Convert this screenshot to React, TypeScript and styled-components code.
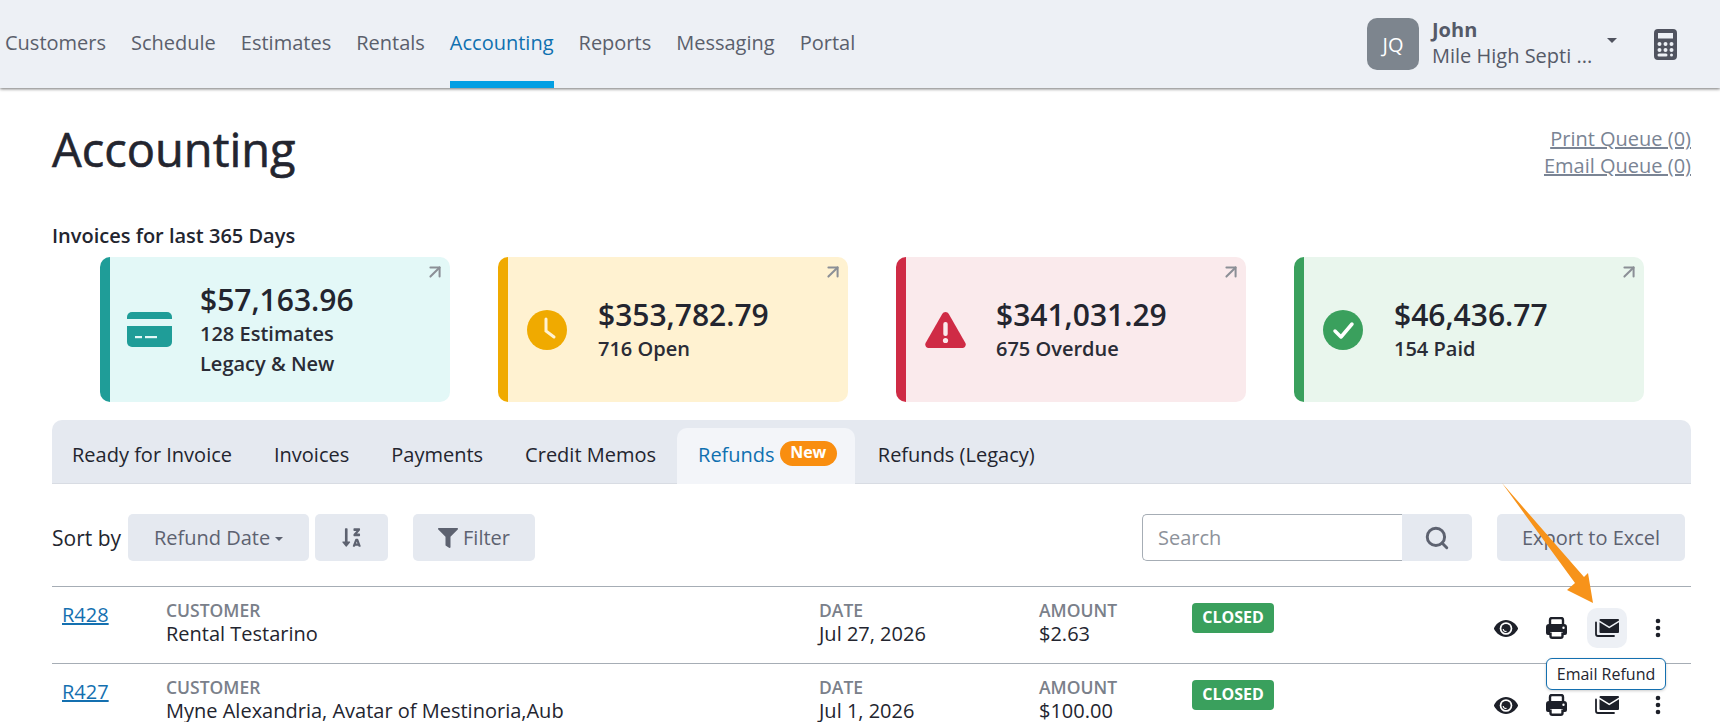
import React from "react";
import styled, { createGlobalStyle } from "styled-components";
import { FaFilter, FaSortAlphaDownAlt } from "react-icons/fa";
import { ArrowUpRight, Search } from "lucide-react";

const Global = createGlobalStyle`
  html, body { margin: 0; padding: 0; background: #fff; }
  body { font-family: "Open Sans", "Liberation Sans", sans-serif; color: #23252f; }
  * { box-sizing: border-box; }
`;

const Page = styled.div`
  position: relative;
  width: 1720px;
  height: 722px;
  overflow: hidden;
`;

const Header = styled.header`
  height: 88px;
  background: #edf0f5;
  box-shadow: 0 1px 3px rgba(0, 0, 0, 0.55);
  display: flex;
  justify-content: space-between;
  padding: 0 43px 0 5px;
`;

const Nav = styled.nav`
  display: flex;
  gap: 25px;
`;

const NavItem = styled.a<{ $active?: boolean }>`
  height: 88px;
  padding-top: 29px;
  font-size: 20px;
  line-height: 27px;
  color: ${(p) => (p.$active ? "#0f70b0" : "#5a5f6c")};
  border-bottom: 7px solid ${(p) => (p.$active ? "#049fe3" : "transparent")};
`;

const UserArea = styled.div`
  display: flex;
  align-items: flex-start;
  padding-top: 18px;
`;

const Avatar = styled.div`
  width: 52px;
  height: 52px;
  border-radius: 10px;
  background: #7d858e;
  color: #fff;
  font-size: 20px;
  display: flex;
  align-items: center;
  justify-content: center;
  margin-right: 13px;
`;

const UserText = styled.div`
  width: 172.5px;
  font-size: 20px;
  line-height: 26px;
  color: #555a68;
  margin-top: -1px;
`;

const UserName = styled.div`
  font-weight: 700;
`;

const Caret = styled.span`
  width: 0;
  height: 0;
  border-left: 5.5px solid transparent;
  border-right: 5.5px solid transparent;
  border-top: 5.5px solid #50535f;
  margin: 20px 37.5px 0 2px;
`;

const CalcIcon = styled.span`
  display: flex;
  margin-top: 11px;
`;

const Main = styled.main`
  padding: 0 29px 0 52px;
`;

const TitleRow = styled.div`
  display: flex;
  justify-content: space-between;
  height: 136px;
  padding-top: 35px;
`;

const Title = styled.h1`
  margin: 0;
  font-size: 47px;
  line-height: 53px;
  font-weight: 400;
  -webkit-text-stroke: 0.6px #23252f;
  color: #23252f;
`;

const Queues = styled.div`
  display: flex;
  flex-direction: column;
  align-items: flex-end;
  font-size: 20px;
  line-height: 27px;
  margin-top: 2px;
`;

const QueueLink = styled.a`
  color: #7a8494;
  text-decoration: underline;
`;

const SectionLabel = styled.div`
  font-size: 20px;
  font-weight: 600;
  line-height: 24px;
  color: #23252f;
`;

const Cards = styled.div`
  display: flex;
  gap: 48px;
  padding-left: 48px;
  margin-top: 9px;
`;

const Card = styled.div<{ $bg: string; $accent: string }>`
  position: relative;
  width: 350px;
  height: 145px;
  background: ${(p) => p.$bg};
  border-left: 10px solid ${(p) => p.$accent};
  border-radius: 10px;
  display: flex;
  align-items: center;
`;

const CardIcon = styled.div`
  width: 90px;
  display: flex;
  justify-content: center;
  padding-right: 12px;
  flex: none;
`;

const CardBody = styled.div`
  color: #23252f;
`;

const Amount = styled.div`
  font-size: 30px;
  line-height: 38px;
  font-weight: 600;
`;

const SubLine = styled.div`
  font-size: 20px;
  line-height: 30px;
  font-weight: 600;
  color: #2a2c36;
`;

const Corner = styled.span`
  position: absolute;
  top: 4px;
  right: 4px;
  display: flex;
  color: #8b8f96;
`;

const TabStrip = styled.div`
  display: flex;
  margin-top: 18px;
  height: 64px;
  padding: 8px 0 0 0;
  background: #e5e9f0;
  border-radius: 10px 10px 0 0;
  border-bottom: 1px solid #d8dce3;
`;

const Tab = styled.div<{ $active?: boolean }>`
  height: 56px;
  padding: 0 ${(p) => (p.$active ? "18px" : "21px")} 3px 21px;
  margin-right: ${(p) => (p.$active ? "2px" : "0")};
  display: flex;
  align-items: center;
  gap: 5px;
  font-size: 20px;
  color: ${(p) => (p.$active ? "#0f70b0" : "#23252f")};
  background: ${(p) => (p.$active ? "#f3f5f9" : "transparent")};
  border-radius: 10px 10px 0 0;
  &:first-child { padding-left: 20px; }
`;

const NewBadge = styled.span`
  height: 25px;
  padding: 0 10.5px;
  border-radius: 13px;
  background: #f98e10;
  color: #fff;
  font-size: 16px;
  font-weight: 700;
  line-height: 23px;
  margin-top: -3px;
`;

const Toolbar = styled.div`
  display: flex;
  align-items: center;
  margin-top: 30px;
  height: 47px;
`;

const SortLabel = styled.span`
  font-size: 21px;
  color: #23252f;
  width: 76px;
`;

const ToolButton = styled.div<{ $w: number; $ml?: number }>`
  width: ${(p) => p.$w}px;
  height: 47px;
  margin-left: ${(p) => p.$ml ?? 0}px;
  background: #e5e9f0;
  border-radius: 5px;
  color: #5d6270;
  font-size: 20px;
  display: flex;
  align-items: center;
  justify-content: center;
  gap: 5px;
  flex: none;
`;

const SmallCaret = styled.span`
  width: 0;
  height: 0;
  border-left: 4.5px solid transparent;
  border-right: 4.5px solid transparent;
  border-top: 4.5px solid #5d6270;
  margin-top: 3px;
`;

const SearchBox = styled.div`
  margin-left: auto;
  width: 260px;
  height: 47px;
  border: 1px solid #a6adb5;
  border-right: none;
  border-radius: 5px 0 0 5px;
  color: #8d929a;
  font-size: 20px;
  display: flex;
  align-items: center;
  padding-left: 15px;
`;

const SearchButton = styled(ToolButton)`
  border-radius: 0 5px 5px 0;
`;

const ToolbarEnd = styled.span`
  width: 6px;
  flex: none;
`;

const Rows = styled.div`
  margin-top: 25px;
`;

const Row = styled.div`
  display: grid;
  grid-template-columns: 114px 653px 220px 153px 295px 1fr;
  height: 77px;
  border-top: 1px solid #a6adb5;
  padding-top: 12px;
`;

const RefLink = styled.a`
  padding-left: 10px;
  margin-top: 3px;
  font-size: 20px;
  line-height: 26px;
  color: #1470b0;
  text-decoration: underline;
`;

const Field = styled.div`
  font-size: 20px;
  line-height: 24px;
  color: #23252f;
`;

const FieldLabel = styled.div`
  font-size: 17.5px;
  font-weight: 600;
  color: #7a808a;
  line-height: 23px;
`;

const StatusBadge = styled.div`
  width: 82px;
  height: 30px;
  margin-top: 4px;
  background: #3aa05d;
  color: #fff;
  border-radius: 4px;
  font-size: 16px;
  font-weight: 700;
  line-height: 28px;
  text-align: center;
`;

const Actions = styled.div`
  display: flex;
  align-items: center;
  height: 40px;
  margin-top: 9px;
  margin-left: -1px;
`;

const ActionButton = styled.div<{ $hover?: boolean }>`
  position: relative;
  width: 40px;
  height: 40px;
  margin-right: 10.5px;
  border-radius: 10px;
  background: ${(p) => (p.$hover ? "#edf0f5" : "transparent")};
  color: #1d2029;
  display: flex;
  align-items: center;
  justify-content: center;
  flex: none;
`;

const Tooltip = styled.div`
  position: absolute;
  top: 50px;
  left: -41px;
  width: 120px;
  height: 32px;
  background: #fff;
  border: 1px solid #1470b0;
  border-radius: 6px;
  box-shadow: 0 1px 3px rgba(0, 0, 0, 0.2);
  color: #23252f;
  font-size: 16px;
  line-height: 30px;
  text-align: center;
  white-space: nowrap;
  z-index: 3;
`;

const ArrowOverlay = styled.svg`
  position: absolute;
  left: 0;
  top: 0;
  width: 1720px;
  height: 722px;
  pointer-events: none;
  z-index: 2;
`;

const CalculatorIcon = () => (
  <svg width="23" height="31" viewBox="0 0 23 31" fill="#50535f">
    <path fillRule="evenodd" d="M4 0h15a4 4 0 0 1 4 4v23a4 4 0 0 1-4 4H4a4 4 0 0 1-4-4V4a4 4 0 0 1 4-4zM4 4v5.500h15V4zM5.500 13a2 2 0 1 0 0 4 2 2 0 0 0 0-4zm6 0a2 2 0 1 0 0 4 2 2 0 0 0 0-4zm6 0a2 2 0 1 0 0 4 2 2 0 0 0 0-4zm-12 6a2 2 0 1 0 0 4 2 2 0 0 0 0-4zm6 0a2 2 0 1 0 0 4 2 2 0 0 0 0-4zm6 0a2 2 0 1 0 0 4 2 2 0 0 0 0-4zM5 24.500a1.500 1.500 0 0 0 0 3h7a1.500 1.500 0 0 0 0-3zm12.500 0a1.500 1.500 0 1 0 0 3 1.500 1.500 0 0 0 0-3z" />
  </svg>
);

const CreditCardIcon = () => (
  <svg width="45" height="35" viewBox="0 0 45 35" fill="#1f9d98">
    <path d="M0 7V5a5 5 0 0 1 5-5h35a5 5 0 0 1 5 5v2z" />
    <path d="M0 14h45v16a5 5 0 0 1-5 5H5a5 5 0 0 1-5-5z" />
    <rect x="8" y="24" width="7" height="2.200" fill="#e3f8f7" />
    <rect x="18" y="24" width="12" height="2.200" fill="#e3f8f7" />
  </svg>
);

const ClockIcon = () => (
  <svg width="40" height="40" viewBox="0 0 40 40">
    <circle cx="20" cy="20" r="20" fill="#f0aa00" />
    <path d="M19 9v12l8 6" stroke="#fff2d1" strokeWidth="3" strokeLinecap="round" fill="none" />
  </svg>
);

const WarnIcon = () => (
  <svg width="41" height="36" viewBox="0 0 41 36">
    <path d="M20.500 0c1.400 0 2.600.8 3.300 2l16.600 29c1.100 2.200-.4 5-3 5H3.600c-2.600 0-4.100-2.800-3-5L17.200 2c.7-1.200 1.900-2 3.300-2z" fill="#cf2b45" />
    <rect x="18.300" y="10" width="4.400" height="14" rx="2" fill="#faeaec" />
    <circle cx="20.500" cy="28.500" r="2.600" fill="#faeaec" />
  </svg>
);

const CheckIcon = () => (
  <svg width="40" height="40" viewBox="0 0 40 40">
    <circle cx="20" cy="20" r="20" fill="#3aa05d" />
    <path d="M12 21l6 6 11-13" stroke="#fff" strokeWidth="3.500" strokeLinecap="round" strokeLinejoin="round" fill="none" />
  </svg>
);

const EyeIcon = () => (
  <svg width="24" height="17" viewBox="0 0 24 17" fill="#1d2029">
    <path d="M12 0C6.500 0 2.300 3.800.2 7.700a1.700 1.700 0 0 0 0 1.600C2.300 13.200 6.500 17 12 17s9.700-3.800 11.800-7.700a1.700 1.700 0 0 0 0-1.600C21.700 3.800 17.500 0 12 0z" />
    <circle cx="12" cy="8.500" r="6.300" fill="#fff" />
    <circle cx="12" cy="8.500" r="4.600" />
    <path d="M12 5.600a2.900 2.900 0 0 1 2.900 2.900" stroke="#fff" strokeWidth="1.100" fill="none" transform="rotate(170 12 8.500)" />
  </svg>
);

const PrinterIcon = () => (
  <svg width="21" height="22" viewBox="0 0 21 22" fill="#1d2029">
    <path d="M4 8V3a2 2 0 0 1 2-2h9a2 2 0 0 1 2 2v5" fill="none" stroke="#1d2029" strokeWidth="2.400" />
    <path fillRule="evenodd" d="M3 7h15a3 3 0 0 1 3 3v6a2 2 0 0 1-2 2h-2.200v-3H4.200v3H2a2 2 0 0 1-2-2v-6a3 3 0 0 1 3-3zm14.500 2.500a1.200 1.200 0 1 0 0 2.400 1.200 1.200 0 0 0 0-2.400z" />
    <path d="M4.500 15.500V19a1.800 1.800 0 0 0 1.800 1.800h8.400a1.800 1.800 0 0 0 1.800-1.800v-3.500" fill="none" stroke="#1d2029" strokeWidth="2.400" />
  </svg>
);

const MailStackIcon = () => (
  <svg width="24" height="18" viewBox="0 0 24 18" fill="#1d2029">
    <path d="M5.500 0H23a1 1 0 0 1 1 1v.6l-9.750 6-9.750-6V1a1 1 0 0 1 1-1z" />
    <path d="M4.500 3.300l9.750 6L24 3.300V13a1 1 0 0 1-1 1H5.500a1 1 0 0 1-1-1z" />
    <path d="M1 3.500V15a2 2 0 0 0 2 2h16" stroke="#1d2029" strokeWidth="1.800" fill="none" strokeLinecap="round" />
  </svg>
);

const KebabIcon = () => (
  <svg width="6" height="20" viewBox="0 0 6 20" fill="#1d2029">
    <circle cx="3" cy="3" r="2.300" />
    <circle cx="3" cy="10" r="2.300" />
    <circle cx="3" cy="17" r="2.300" />
  </svg>
);

const cards = [
  { bg: "#e3f8f7", accent: "#1f9d98", icon: <CreditCardIcon />, amount: "$57,163.96", lines: ["128 Estimates", "Legacy & New"] },
  { bg: "#fff2d1", accent: "#f0aa00", icon: <ClockIcon />, amount: "$353,782.79", lines: ["716 Open"] },
  { bg: "#faeaec", accent: "#cf2b45", icon: <WarnIcon />, amount: "$341,031.29", lines: ["675 Overdue"] },
  { bg: "#e9f6ed", accent: "#3aa05d", icon: <CheckIcon />, amount: "$46,436.77", lines: ["154 Paid"] },
];

const rows = [
  { id: "R428", customer: "Rental Testarino", date: "Jul 27, 2026", amount: "$2.63", hover: true },
  { id: "R427", customer: "Myne Alexandria, Avatar of Mestinoria,Aub", date: "Jul 1, 2026", amount: "$100.00", hover: false },
];

const navItems = ["Customers", "Schedule", "Estimates", "Rentals", "Accounting", "Reports", "Messaging", "Portal"];
const tabs = ["Ready for Invoice", "Invoices", "Payments", "Credit Memos"];

export default function App() {
  return (
    <Page>
      <Global />
      <Header>
        <Nav>
          {navItems.map((n) => (
            <NavItem key={n} $active={n === "Accounting"}>{n}</NavItem>
          ))}
        </Nav>
        <UserArea>
          <Avatar>JQ</Avatar>
          <UserText>
            <UserName>John</UserName>
            <div>Mile High Septi ...</div>
          </UserText>
          <Caret />
          <CalcIcon><CalculatorIcon /></CalcIcon>
        </UserArea>
      </Header>
      <Main>
        <TitleRow>
          <Title>Accounting</Title>
          <Queues>
            <QueueLink>Print Queue (0)</QueueLink>
            <QueueLink>Email Queue (0)</QueueLink>
          </Queues>
        </TitleRow>
        <SectionLabel>Invoices for last 365 Days</SectionLabel>
        <Cards>
          {cards.map((c) => (
            <Card key={c.amount} $bg={c.bg} $accent={c.accent}>
              <CardIcon>{c.icon}</CardIcon>
              <CardBody>
                <Amount>{c.amount}</Amount>
                {c.lines.map((l) => <SubLine key={l}>{l}</SubLine>)}
              </CardBody>
              <Corner><ArrowUpRight size={22} strokeWidth={2.2} /></Corner>
            </Card>
          ))}
        </Cards>
        <TabStrip>
          {tabs.map((t) => <Tab key={t}>{t}</Tab>)}
          <Tab $active>Refunds <NewBadge>New</NewBadge></Tab>
          <Tab>Refunds (Legacy)</Tab>
        </TabStrip>
        <Toolbar>
          <SortLabel>Sort by</SortLabel>
          <ToolButton $w={181}>Refund Date <SmallCaret /></ToolButton>
          <ToolButton $w={73} $ml={6}><FaSortAlphaDownAlt size={21} /></ToolButton>
          <ToolButton $w={122} $ml={25}><FaFilter size={20} /> Filter</ToolButton>
          <SearchBox>Search</SearchBox>
          <SearchButton $w={70}><Search size={26} strokeWidth={2.7} /></SearchButton>
          <ToolButton $w={188} $ml={25}>Export to Excel</ToolButton>
          <ToolbarEnd />
        </Toolbar>
        <Rows>
          {rows.map((r) => (
            <Row key={r.id}>
              <RefLink>{r.id}</RefLink>
              <Field><FieldLabel>CUSTOMER</FieldLabel>{r.customer}</Field>
              <Field><FieldLabel>DATE</FieldLabel>{r.date}</Field>
              <Field><FieldLabel>AMOUNT</FieldLabel>{r.amount}</Field>
              <div><StatusBadge>CLOSED</StatusBadge></div>
              <Actions>
                <ActionButton><EyeIcon /></ActionButton>
                <ActionButton><PrinterIcon /></ActionButton>
                <ActionButton $hover={r.hover}>
                  <MailStackIcon />
                  {r.hover && <Tooltip>Email Refund</Tooltip>}
                </ActionButton>
                <ActionButton><KebabIcon /></ActionButton>
              </Actions>
            </Row>
          ))}
        </Rows>
      </Main>
      <ArrowOverlay viewBox="0 0 1720 722">
        <polygon points="1502,483 1584,577 1588,573 1593,603 1567,590 1575,583" fill="#f7931a" />
      </ArrowOverlay>
    </Page>
  );
}
